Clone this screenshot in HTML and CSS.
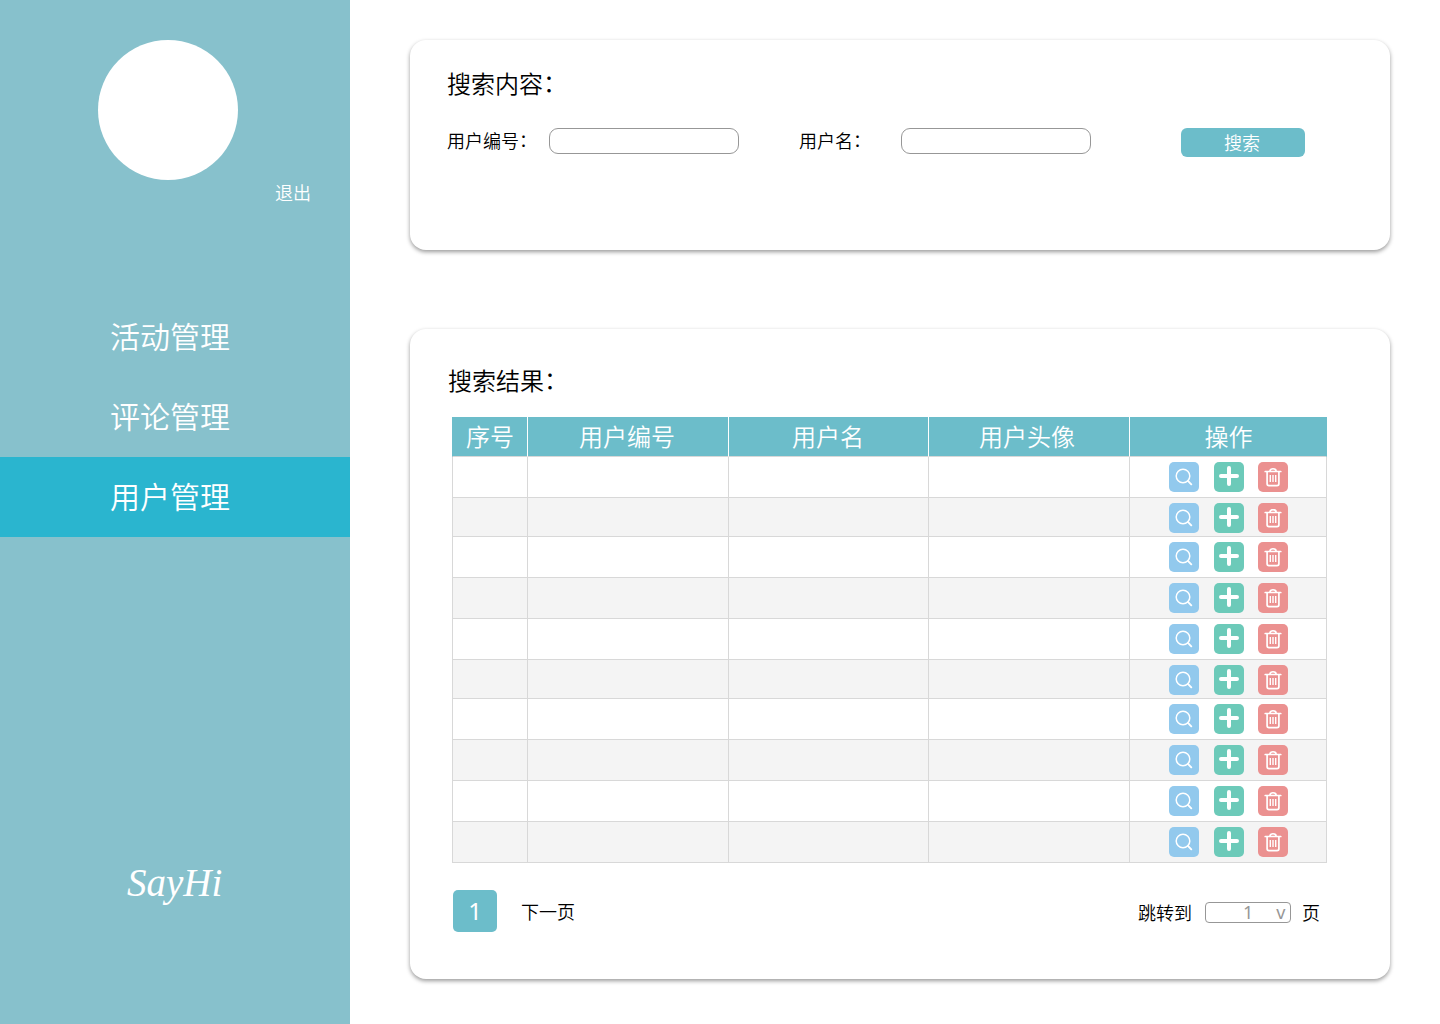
FILE: index.html
```html
<!DOCTYPE html>
<html lang="zh-CN">
<head>
<meta charset="utf-8">
<title>用户管理</title>
<link rel="stylesheet" href="styles.css">
</head>
<body>
<svg class="sprite" width="0" height="0" aria-hidden="true">
  <symbol id="view" viewBox="0 0 30 30"><circle cx="14" cy="14" r="6.8" fill="none" stroke="#fff" stroke-width="1.5"/><path d="M18.9 18.9l3.4 3.4" stroke="#fff" stroke-width="1.9" stroke-linecap="round"/></symbol>
  <symbol id="add" viewBox="0 0 30 30"><path d="M15 6v16M7 14h16" stroke="#fff" stroke-width="4" stroke-linecap="round"/></symbol>
  <symbol id="trash" viewBox="0 0 30 30"><path d="M7.2 9.5h15.6M11.9 9.2c0-3.3 6.2-3.3 6.2 0M9.1 9.8v12q0 1.9 1.9 1.9h8q1.9 0 1.9-1.9v-12" fill="none" stroke="#fff" stroke-width="1.7" stroke-linecap="round"/><path d="M12.3 13v7M15 13v7M17.7 13v7" stroke="#fff" stroke-width="1.4"/></symbol>
</svg>
<div class="page">
  <aside class="sidebar">
    <div class="avatar"></div>
    <a class="logout">退出</a>
    <nav class="menu">
      <a class="menu-item">活动管理</a>
      <a class="menu-item">评论管理</a>
      <a class="menu-item active">用户管理</a>
    </nav>
    <div class="brand">SayHi</div>
  </aside>
  <main class="main">
    <section class="card search">
      <h2 class="title">搜索内容<span class="colon">：</span></h2>
      <form class="form">
        <label class="label label-id">用户编号<span class="colon">：</span></label><input class="field field-id">
        <label class="label label-name">用户名<span class="colon">：</span></label><input class="field field-name">
        <button class="submit" type="button">搜索</button>
      </form>
    </section>
    <section class="card results">
      <h2 class="title">搜索结果<span class="colon">：</span></h2>
      <div class="table">
        <div class="row head"><div>序号</div><div>用户编号</div><div>用户名</div><div>用户头像</div><div>操作</div></div>
        <div class="row"><div></div><div></div><div></div><div></div><div class="ops"><svg class="op view"><use href="#view"/></svg><svg class="op add"><use href="#add"/></svg><svg class="op trash"><use href="#trash"/></svg></div></div>
        <div class="row short"><div></div><div></div><div></div><div></div><div class="ops"><svg class="op view"><use href="#view"/></svg><svg class="op add"><use href="#add"/></svg><svg class="op trash"><use href="#trash"/></svg></div></div>
        <div class="row"><div></div><div></div><div></div><div></div><div class="ops"><svg class="op view"><use href="#view"/></svg><svg class="op add"><use href="#add"/></svg><svg class="op trash"><use href="#trash"/></svg></div></div>
        <div class="row"><div></div><div></div><div></div><div></div><div class="ops"><svg class="op view"><use href="#view"/></svg><svg class="op add"><use href="#add"/></svg><svg class="op trash"><use href="#trash"/></svg></div></div>
        <div class="row"><div></div><div></div><div></div><div></div><div class="ops"><svg class="op view"><use href="#view"/></svg><svg class="op add"><use href="#add"/></svg><svg class="op trash"><use href="#trash"/></svg></div></div>
        <div class="row short"><div></div><div></div><div></div><div></div><div class="ops"><svg class="op view"><use href="#view"/></svg><svg class="op add"><use href="#add"/></svg><svg class="op trash"><use href="#trash"/></svg></div></div>
        <div class="row"><div></div><div></div><div></div><div></div><div class="ops"><svg class="op view"><use href="#view"/></svg><svg class="op add"><use href="#add"/></svg><svg class="op trash"><use href="#trash"/></svg></div></div>
        <div class="row"><div></div><div></div><div></div><div></div><div class="ops"><svg class="op view"><use href="#view"/></svg><svg class="op add"><use href="#add"/></svg><svg class="op trash"><use href="#trash"/></svg></div></div>
        <div class="row"><div></div><div></div><div></div><div></div><div class="ops"><svg class="op view"><use href="#view"/></svg><svg class="op add"><use href="#add"/></svg><svg class="op trash"><use href="#trash"/></svg></div></div>
        <div class="row"><div></div><div></div><div></div><div></div><div class="ops"><svg class="op view"><use href="#view"/></svg><svg class="op add"><use href="#add"/></svg><svg class="op trash"><use href="#trash"/></svg></div></div>
      </div>
      <div class="pager">
        <span class="current">1</span>
        <a class="next">下一页</a>
        <span class="jump">跳转到</span>
        <span class="select"><span>1</span><span class="caret">v</span></span>
        <span class="unit">页</span>
      </div>
    </section>
  </main>
</div>
</body>
</html>
```
FILE: styles.css
```css
* { box-sizing: border-box; }
body {
  margin: 0;
  background: #fff;
  color: #000;
  font-family: "Noto Sans CJK SC", sans-serif;
  font-weight: 350;
}
.sprite { display: none; }
.page { display: flex; width: 1440px; height: 1024px; overflow: hidden; }

.sidebar {
  display: flex;
  flex-direction: column;
  width: 350px;
  background: #87c1cc;
  color: #fff;
}
.avatar { width: 140px; height: 140px; margin: 40px 0 0 98px; border-radius: 50%; background: #fff; }
.logout { margin-left: 275px; font-size: 18px; line-height: 24px; }
.menu { margin-top: 93px; }
.menu-item { display: block; height: 80px; padding-left: 110px; font-size: 30px; line-height: 76px; }
.menu-item.active { background: #2ab5cf; }
.brand {
  margin: 316px 0 0 127px;
  font: italic 39px/60px "Liberation Serif", serif;
  white-space: nowrap;
}

.main { width: 1090px; padding: 40px 50px 0 60px; }
.card {
  width: 980px;
  border-radius: 16px;
  background: #fff;
  box-shadow: 0 2px 4px rgba(0, 0, 0, .4);
}
.title { margin: 0; font-size: 24px; font-weight: 350; line-height: 34px; }
.colon { display: inline-block; line-height: 1; transform: translateY(-.06em); }
.search { height: 210px; padding: 26px 0 0 37px; }
.form { display: flex; align-items: flex-start; margin-top: 28px; }
.label { font-size: 18px; line-height: 24px; white-space: nowrap; }
.label-id { width: 102px; }
.label-name { width: 102px; margin-left: 60px; }
.field { width: 190px; height: 26px; padding: 0 8px; border: 1px solid #979797; border-radius: 9px; background: #fff; }
.submit {
  width: 124px;
  height: 29px;
  margin-left: 90px;
  padding: 0 2px 1px 0;
  border: 0;
  border-radius: 6px;
  background: #6cbdca;
  color: #fff;
  font: 350 18px/28px "Noto Sans CJK SC", sans-serif;
}

.results { height: 650px; margin-top: 79px; padding: 34px 0 0 38px; }
.table { width: 875px; margin: 20px 0 0 4px; }
.row { display: grid; grid-template-columns: 76px 201px 200px 201px 197px; height: 41px; }
.row.short { height: 39px; }
.row > div { border-right: 1px solid #d8d8d8; border-bottom: 1px solid #d8d8d8; }
.row > div:first-child { border-left: 1px solid #d8d8d8; }
.row:nth-child(odd) { background: #f4f4f4; }
.row.head { height: 40px; background: #6cbdca; color: #fff; font-size: 24px; line-height: 37px; text-align: center; }
.row.head > div { border-right-color: #fff; }
.row.head > div:nth-child(2) { padding-right: 2px; }
.row.head > div:nth-child(3) { padding-right: 1px; }
.row.head > div:nth-child(4) { padding-right: 4px; }
.row.head > div:nth-child(5) { padding-left: 1px; }
.row.head > div:first-child { border-left-color: #6cbdca; }
.row.head > div:last-child { border-right-color: #6cbdca; }
.row .ops { display: flex; padding: 5px 0 0 39px; height: inherit; }
.op { flex: none; width: 30px; height: 30px; border-radius: 5px; }
.op.view { background: #92c9ed; }
.op.add { margin-left: 15px; background: #6ccab9; }
.op.trash { margin-left: 14px; background: #eb9190; }

.pager { display: flex; align-items: flex-start; margin: 27px 0 0 5px; font-size: 18px; line-height: 24px; }
.current { width: 44px; height: 42px; border-radius: 5px; background: #6cbdca; color: #fff; font-family: "Noto Sans", sans-serif; font-weight: 400; font-size: 24px; line-height: 41px; text-align: center; }
.next { width: 54px; margin: 9px 0 0 24px; }
.jump { width: 54px; margin: 10px 0 0 563px; }
.select {
  display: flex;
  width: 86px;
  height: 21px;
  margin: 12px 0 0 13px;
  padding-left: 37px;
  border: 1px solid #979797;
  border-radius: 4px;
  color: #979797;
  font-family: "Noto Sans", sans-serif;
  font-weight: 400;
  line-height: 19px;
}
.caret { margin-left: 23px; }
.unit { margin: 10px 0 0 11px; }
```
